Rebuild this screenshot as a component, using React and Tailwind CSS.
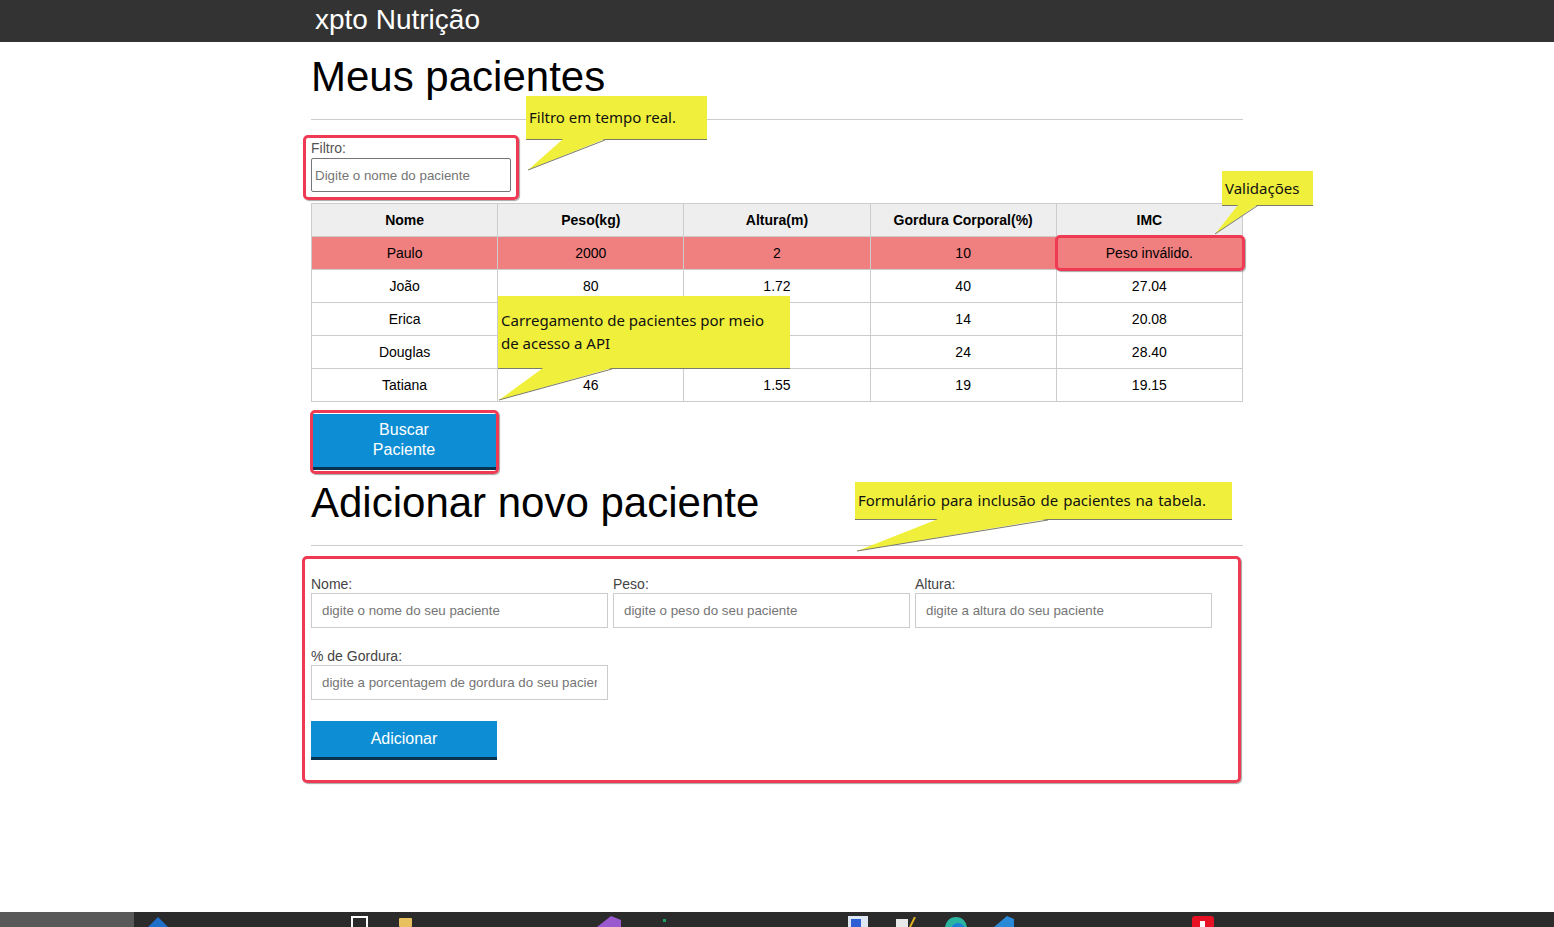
import React from "react";

// peso/altura de Erica e Douglas ficam atrás do balão da API
const pacientes = [
  { nome: "Paulo", peso: "2000", altura: "2", gordura: "10", imc: "Peso inválido.", invalido: true },
  { nome: "João", peso: "80", altura: "1.72", gordura: "40", imc: "27.04" },
  { nome: "Erica", peso: "", altura: "", gordura: "14", imc: "20.08" },
  { nome: "Douglas", peso: "", altura: "", gordura: "24", imc: "28.40" },
  { nome: "Tatiana", peso: "46", altura: "1.55", gordura: "19", imc: "19.15" },
];

const Destaque = ({ className }) => (
  <div className={`absolute rounded-[5px] border-[3px] border-[#ee3a52] shadow-[1px_1px_1px_rgba(0,0,0,0.35)] ${className}`} />
);

const Balao = ({ className, children }) => (
  <div className={`absolute flex items-center bg-[#f0f03c] border-b border-[#7a7a6a] px-[3px] font-['Noto_Sans',sans-serif] text-[15px] text-[#111] ${className}`}>
    {children}
  </div>
);

const Campo = ({ label, placeholder }) => (
  <div className="w-[297px]">
    <label className="block text-[14px] leading-[16px] text-[#444]">{label}</label>
    <input
      className="mt-[1px] block h-[35px] w-[297px] border border-[#ccc] px-[10px] text-[13.33px] placeholder:text-[#757575] outline-none"
      placeholder={placeholder}
    />
  </div>
);

export default function App() {
  return (
    <div className="relative flex min-h-[927px] flex-col overflow-hidden bg-white font-['Liberation_Sans',Arial,sans-serif] text-black">
      <header className="h-[42px] bg-[#333]">
        <div className="mx-auto w-[932px]">
          <h1 className="pl-[4px] text-[28px] leading-[40px] text-white">xpto Nutrição</h1>
        </div>
      </header>

      <main className="flex-1">
        <div className="mx-auto w-[932px]">
          <h1 className="mt-[11px] text-[42px] leading-[48px]">Meus pacientes</h1>
          <hr className="mt-[18px] border-[#ccc]" />

          <label className="mt-[20px] block text-[14px] leading-[16px] text-[#555]">Filtro:</label>
          <input
            className="mt-[2px] block h-[34px] w-[200px] rounded-[2px] border border-[#767676] px-[3px] text-[13.33px] placeholder:text-[#757575] outline-none"
            placeholder="Digite o nome do paciente"
          />

          <table className="mt-[11px] w-full table-fixed border-collapse text-[14px]">
            <thead>
              <tr>
                {["Nome", "Peso(kg)", "Altura(m)", "Gordura Corporal(%)", "IMC"].map((h) => (
                  <th key={h} className="h-[33px] border border-[#ccc] bg-[#eee] font-bold">{h}</th>
                ))}
              </tr>
            </thead>
            <tbody>
              {pacientes.map((p) => (
                <tr key={p.nome} className={p.invalido ? "bg-[#f08080]" : ""}>
                  <td className="h-[33px] border border-[#ccc] text-center">{p.nome}</td>
                  <td className="h-[33px] border border-[#ccc] text-center">{p.peso}</td>
                  <td className="h-[33px] border border-[#ccc] text-center">{p.altura}</td>
                  <td className="h-[33px] border border-[#ccc] text-center">{p.gordura}</td>
                  <td className="h-[33px] border border-[#ccc] text-center">{p.imc}</td>
                </tr>
              ))}
            </tbody>
          </table>

          <button className="mt-[12px] block h-[56px] w-[186px] border-b-[3px] border-[#08324d] bg-[#0d8ed4] pb-[2px] text-[16px] leading-[20px] text-white">
            Buscar<br />Paciente
          </button>

          <h2 className="mt-[9px] text-[42px] leading-[48px]">Adicionar novo paciente</h2>
          <hr className="mt-[18px] border-[#ccc]" />

          <form className="pt-[30px]" onSubmit={(e) => e.preventDefault()}>
            <div className="flex gap-[5px]">
              <Campo label="Nome:" placeholder="digite o nome do seu paciente" />
              <Campo label="Peso:" placeholder="digite o peso do seu paciente" />
              <Campo label="Altura:" placeholder="digite a altura do seu paciente" />
            </div>
            <div className="mt-[20px] flex">
              <Campo label="% de Gordura:" placeholder="digite a porcentagem de gordura do seu paciente" />
            </div>
            <button className="mt-[21px] block h-[39px] w-[186px] border-b-[3px] border-[#08324d] bg-[#0d8ed4] text-[16px] text-white">
              Adicionar
            </button>
          </form>
        </div>
      </main>

      {/* barra de tarefas */}
      <div className="flex h-[15px] overflow-hidden bg-[#2b2b2b]">
        <div className="w-[134px] shrink-0 bg-[#595959]" />
        <svg className="ml-[14px] mt-[5px] shrink-0" width="20" height="10"><polygon points="10,0 20,10 0,10" fill="#1e6fc8" /></svg>
        <svg className="ml-[183px] mt-[4px] shrink-0" width="17" height="11"><rect x="1" y="1" width="15" height="12" fill="none" stroke="#fff" strokeWidth="2" /></svg>
        <svg className="ml-[31px] mt-[6px] shrink-0" width="13" height="9"><rect x="0" y="0" width="13" height="9" rx="1" fill="#e8c060" /></svg>
        <svg className="ml-[185px] mt-[4px] shrink-0" width="24" height="11"><polygon points="14,0 24,4 24,11 0,11" fill="#9b59d0" /></svg>
        <svg className="ml-[42px] mt-[7px] shrink-0" width="3" height="3"><rect width="3" height="3" fill="#1aa260" /></svg>
        <svg className="ml-[182px] mt-[4px] shrink-0" width="20" height="11"><rect x="0" y="0" width="20" height="11" fill="#dfe6f3" /><rect x="3" y="3" width="10" height="8" fill="#2c5fd4" /></svg>
        <svg className="ml-[28px] mt-[5px] shrink-0" width="20" height="10"><rect x="0" y="2" width="12" height="8" fill="#e9e9e9" /><line x1="14" y1="10" x2="19" y2="0" stroke="#e0b020" strokeWidth="2" /></svg>
        <svg className="ml-[28px] mt-[4px] shrink-0" width="24" height="11"><circle cx="12" cy="12" r="11" fill="#2bb5a0" /><circle cx="14" cy="14" r="7" fill="#1e7fd6" /></svg>
        <svg className="ml-[22px] mt-[4px] shrink-0" width="24" height="11"><polygon points="17,0 24,3 24,11 4,11" fill="#2a8ad8" /></svg>
        <svg className="ml-[178px] mt-[4px] shrink-0" width="22" height="11"><rect x="0" y="0" width="22" height="14" rx="3" fill="#e81123" /><rect x="8" y="5" width="5" height="6" fill="#fff" /></svg>
      </div>

      {/* anotações sobre a tela */}
      <div className="pointer-events-none absolute inset-0">
        <Destaque className="left-[303px] top-[135px] h-[65px] w-[216px]" />
        <Destaque className="left-[1055px] top-[235px] h-[36px] w-[190px]" />
        <Destaque className="left-[310px] top-[410px] h-[64px] w-[189px]" />
        <Destaque className="left-[302px] top-[556px] h-[227px] w-[939px]" />

        <Balao className="left-[526px] top-[96px] h-[44px] w-[181px]">Filtro em tempo real.</Balao>
        <Balao className="left-[1222px] top-[171px] h-[35px] w-[91px]">Validações</Balao>
        <Balao className="left-[498px] top-[296px] h-[73px] w-[292px] leading-[23px]">
          <span>Carregamento de pacientes por meio<br />de acesso a API</span>
        </Balao>
        <Balao className="left-[855px] top-[482px] h-[38px] w-[377px] [word-spacing:1px]">
          Formulário para inclusão de pacientes na tabela.
        </Balao>

        <svg className="absolute left-0 top-0" width="1554" height="927">
          <polygon points="563,139 605,139 528,170" fill="#f0f03c" />
          <line x1="528" y1="170" x2="605" y2="140" stroke="#7a7a6a" strokeWidth="1" />
          <polygon points="1238,205 1257,205 1215,234" fill="#f0f03c" />
          <line x1="1215" y1="234" x2="1257" y2="206" stroke="#7a7a6a" strokeWidth="1" />
          <polygon points="543,368 612,368 499,400" fill="#f0f03c" />
          <line x1="499" y1="400" x2="612" y2="369" stroke="#7a7a6a" strokeWidth="1" />
          <polygon points="938,519 1048,519 857,551" fill="#f0f03c" />
          <line x1="857" y1="551" x2="1048" y2="520" stroke="#7a7a6a" strokeWidth="1" />
        </svg>
      </div>
    </div>
  );
}
